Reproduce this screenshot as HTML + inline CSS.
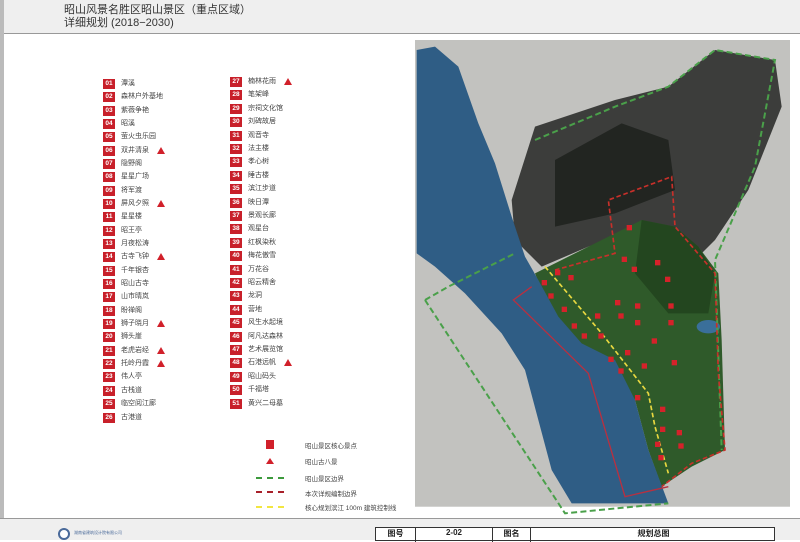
<!DOCTYPE html>
<html><head><meta charset="utf-8"><style>
*{margin:0;padding:0;box-sizing:border-box}
body{width:800px;height:540px;overflow:hidden;background:#fff;font-family:"Liberation Sans","Noto Sans CJK SC",sans-serif;position:relative}
.hdr{position:absolute;left:0;top:0;width:800px;height:34px;background:#efefef;border-bottom:1px solid #999}
.hdr div{position:absolute;left:64px;font-size:11px;color:#333;line-height:12px}
.lstrip{position:absolute;left:0;top:0;width:4px;height:540px;background:#bbb}
.ftr{position:absolute;left:0;top:518px;width:800px;height:22px;background:#efefef;border-top:1px solid #999}
.it{position:absolute;font-size:7px;color:#444;height:10px;line-height:10px;white-space:nowrap}
.it b{display:inline-block;width:12px;height:10px;background:#c8202a;color:#fff;font-size:6.5px;text-align:center;margin-right:6px;font-weight:bold;vertical-align:top}
.tri{display:inline-block;width:0;height:0;border-left:4px solid transparent;border-right:4px solid transparent;border-bottom:7px solid #d1202a;margin-left:8px;vertical-align:top;margin-top:1px}
.lg{position:absolute;font-size:6.5px;color:#444;left:305px}
.dash{position:absolute;left:256px;width:28px;height:0;border-top:2px dashed}
</style></head><body>
<div class="hdr"><div style="top:4px">昭山风景名胜区昭山景区（重点区域）</div><div style="top:17px">详细规划 (2018−2030)</div></div>
<div class="lstrip"></div>

<div class="it" style="left:103px;top:79px"><b>01</b>潭溪</div>
<div class="it" style="left:103px;top:92px"><b>02</b>森林户外基地</div>
<div class="it" style="left:103px;top:106px"><b>03</b>紫薇争艳</div>
<div class="it" style="left:103px;top:119px"><b>04</b>昭溪</div>
<div class="it" style="left:103px;top:132px"><b>05</b>萤火虫乐园</div>
<div class="it" style="left:103px;top:146px"><b>06</b>双井清泉<span class="tri"></span></div>
<div class="it" style="left:103px;top:159px"><b>07</b>隐野阁</div>
<div class="it" style="left:103px;top:172px"><b>08</b>星星广场</div>
<div class="it" style="left:103px;top:186px"><b>09</b>将军渡</div>
<div class="it" style="left:103px;top:199px"><b>10</b>屏风夕照<span class="tri"></span></div>
<div class="it" style="left:103px;top:212px"><b>11</b>星星楼</div>
<div class="it" style="left:103px;top:226px"><b>12</b>昭王亭</div>
<div class="it" style="left:103px;top:239px"><b>13</b>月夜松涛</div>
<div class="it" style="left:103px;top:252px"><b>14</b>古寺飞钟<span class="tri"></span></div>
<div class="it" style="left:103px;top:266px"><b>15</b>千年银杏</div>
<div class="it" style="left:103px;top:279px"><b>16</b>昭山古寺</div>
<div class="it" style="left:103px;top:292px"><b>17</b>山市晴岚</div>
<div class="it" style="left:103px;top:306px"><b>18</b>盼禅阁</div>
<div class="it" style="left:103px;top:319px"><b>19</b>狮子晓月<span class="tri"></span></div>
<div class="it" style="left:103px;top:332px"><b>20</b>狮头崖</div>
<div class="it" style="left:103px;top:346px"><b>21</b>老虎岩经<span class="tri"></span></div>
<div class="it" style="left:103px;top:359px"><b>22</b>托岭丹霞<span class="tri"></span></div>
<div class="it" style="left:103px;top:372px"><b>23</b>伟人亭</div>
<div class="it" style="left:103px;top:386px"><b>24</b>古栈道</div>
<div class="it" style="left:103px;top:399px"><b>25</b>临空阅江廊</div>
<div class="it" style="left:103px;top:413px"><b>26</b>古港道</div>

<div class="it" style="left:230px;top:77px"><b>27</b>楠林花雨<span class="tri"></span></div>
<div class="it" style="left:230px;top:90px"><b>28</b>笔架峰</div>
<div class="it" style="left:230px;top:104px"><b>29</b>宗祠文化馆</div>
<div class="it" style="left:230px;top:117px"><b>30</b>刘碑故居</div>
<div class="it" style="left:230px;top:131px"><b>31</b>观音寺</div>
<div class="it" style="left:230px;top:144px"><b>32</b>法主楼</div>
<div class="it" style="left:230px;top:157px"><b>33</b>孝心树</div>
<div class="it" style="left:230px;top:171px"><b>34</b>睡古楼</div>
<div class="it" style="left:230px;top:184px"><b>35</b>滨江步道</div>
<div class="it" style="left:230px;top:198px"><b>36</b>映日潭</div>
<div class="it" style="left:230px;top:211px"><b>37</b>景观长廊</div>
<div class="it" style="left:230px;top:224px"><b>38</b>观星台</div>
<div class="it" style="left:230px;top:238px"><b>39</b>红枫染秋</div>
<div class="it" style="left:230px;top:251px"><b>40</b>梅花傲雪</div>
<div class="it" style="left:230px;top:265px"><b>41</b>万花谷</div>
<div class="it" style="left:230px;top:278px"><b>42</b>昭云精舍</div>
<div class="it" style="left:230px;top:291px"><b>43</b>龙洞</div>
<div class="it" style="left:230px;top:305px"><b>44</b>营地</div>
<div class="it" style="left:230px;top:318px"><b>45</b>风生水起境</div>
<div class="it" style="left:230px;top:332px"><b>46</b>阿凡达森林</div>
<div class="it" style="left:230px;top:345px"><b>47</b>艺术展览馆</div>
<div class="it" style="left:230px;top:358px"><b>48</b>石港远帆<span class="tri"></span></div>
<div class="it" style="left:230px;top:372px"><b>49</b>昭山码头</div>
<div class="it" style="left:230px;top:385px"><b>50</b>千福塔</div>
<div class="it" style="left:230px;top:399px"><b>51</b>黄兴二母墓</div>

<div style="position:absolute;left:266px;top:440px;width:8px;height:9px;background:#d1202a"></div>
<div class="lg" style="top:440px">昭山景区核心景点</div>
<div style="position:absolute;left:266px;top:458px;width:0;height:0;border-left:4px solid transparent;border-right:4px solid transparent;border-bottom:6px solid #d1202a"></div>
<div class="lg" style="top:456px">昭山古八景</div>
<div class="dash" style="top:477px;border-color:#3c9a3c"></div>
<div class="lg" style="top:473px">昭山景区边界</div>
<div class="dash" style="top:491px;border-color:#a8202a"></div>
<div class="lg" style="top:488px">本次详规编制边界</div>
<div class="dash" style="top:506px;border-color:#f2e640"></div>
<div class="lg" style="top:502px">核心规划滨江 100m 建筑控制线</div>

<svg style="position:absolute;left:415px;top:40px" width="385" height="475" viewBox="0 0 1155 1425" preserveAspectRatio="none">
<rect x="0" y="0" width="1125" height="1400" fill="#b9bab6"/>
<rect x="0" y="0" width="1125" height="1400" fill="#cfd0cc" opacity=".4"/>
<path d="M290,480 L360,260 L600,180 L760,140 L900,30 L1080,60 L1100,200 L1000,450 L900,600 L850,650 L700,560 L520,620 L380,680 L300,600Z" fill="#3c3d3b"/>
<path d="M420,360 L620,250 L760,300 L780,450 L600,520 L420,560Z" fill="#222521"/>
<path d="M360,700 L560,600 L680,540 L780,560 L850,620 L910,700 L920,900 L930,1230 L830,1280 L740,1340 L700,1230 L660,1080 L580,960 L480,900 L400,800Z" fill="#2f5a2a"/>
<path d="M680,540 L780,560 L850,620 L900,700 L880,820 L760,820 L660,700Z" fill="#23461f"/>
<path d="M5,30 L60,20 L130,80 L190,250 L240,370 L290,530 L330,650 L370,720 L430,830 L500,910 L600,960 L660,1080 L700,1230 L760,1390 L470,1390 L410,1290 L370,1140 L330,990 L260,880 L150,760 L60,680 L5,640Z" fill="#2f5d85"/>
<ellipse cx="880" cy="860" rx="35" ry="20" fill="#3a6f9a"/>
<path d="M360,300 L600,200 L760,140 L900,30 L1080,60 L1020,380 L900,660 L920,1230" fill="none" stroke="#4aa04a" stroke-width="6" stroke-dasharray="18,10"/>
<path d="M30,780 L100,740 L300,640 M30,780 L450,1420 L760,1390" fill="none" stroke="#4aa04a" stroke-width="6" stroke-dasharray="18,10"/>
<path d="M420,690 L600,640 L580,480 L770,410 L780,560 L900,700 L910,1000 L930,1230 L830,1270 L740,1340" fill="none" stroke="#c8302a" stroke-width="5" stroke-dasharray="14,8"/>
<path d="M350,740 L295,780 L520,1000 L630,1370 L760,1340" fill="none" stroke="#b83040" stroke-width="4"/>
<path d="M390,680 L560,880 L700,1060 L720,1160 L760,1300" fill="none" stroke="#e8d840" stroke-width="5" stroke-dasharray="14,8"/>
<g fill="#d6222a">
<rect x="380" y="720" width="16" height="16"/><rect x="420" y="690" width="16" height="16"/><rect x="460" y="705" width="16" height="16"/><rect x="400" y="760" width="16" height="16"/><rect x="440" y="800" width="16" height="16"/><rect x="470" y="850" width="16" height="16"/><rect x="500" y="880" width="16" height="16"/><rect x="540" y="820" width="16" height="16"/><rect x="550" y="880" width="16" height="16"/><rect x="600" y="780" width="16" height="16"/><rect x="610" y="820" width="16" height="16"/><rect x="620" y="650" width="16" height="16"/><rect x="650" y="680" width="16" height="16"/><rect x="660" y="790" width="16" height="16"/><rect x="660" y="840" width="16" height="16"/><rect x="630" y="930" width="16" height="16"/><rect x="580" y="950" width="16" height="16"/><rect x="610" y="985" width="16" height="16"/><rect x="680" y="970" width="16" height="16"/><rect x="720" y="660" width="16" height="16"/><rect x="750" y="710" width="16" height="16"/><rect x="760" y="790" width="16" height="16"/><rect x="760" y="840" width="16" height="16"/><rect x="710" y="895" width="16" height="16"/><rect x="770" y="960" width="16" height="16"/><rect x="660" y="1065" width="16" height="16"/><rect x="735" y="1100" width="16" height="16"/><rect x="735" y="1160" width="16" height="16"/><rect x="785" y="1170" width="16" height="16"/><rect x="720" y="1205" width="16" height="16"/><rect x="730" y="1245" width="16" height="16"/><rect x="790" y="1210" width="16" height="16"/><rect x="635" y="555" width="16" height="16"/>
</g>
</svg>

<div class="ftr">
<div style="position:absolute;left:58px;top:9px;width:12px;height:12px;border-radius:50%;border:2px solid #4a6a9a;background:#fff"></div>
<div style="position:absolute;left:74px;top:11px;font-size:4px;color:#4a6a9a">湖南省建筑设计院有限公司</div>
<div style="position:absolute;left:375px;top:8px;width:400px;height:14px;border:1px solid #333;background:#fff;font-size:8px;font-weight:bold;color:#222">
<span style="position:absolute;left:0;width:40px;text-align:center;border-right:1px solid #333;height:14px">图号</span>
<span style="position:absolute;left:40px;width:77px;text-align:center;border-right:1px solid #333;height:14px">2-02</span>
<span style="position:absolute;left:117px;width:38px;text-align:center;border-right:1px solid #333;height:14px">图名</span>
<span style="position:absolute;left:155px;width:245px;text-align:center">规划总图</span>
</div>
</div>
</body></html>
